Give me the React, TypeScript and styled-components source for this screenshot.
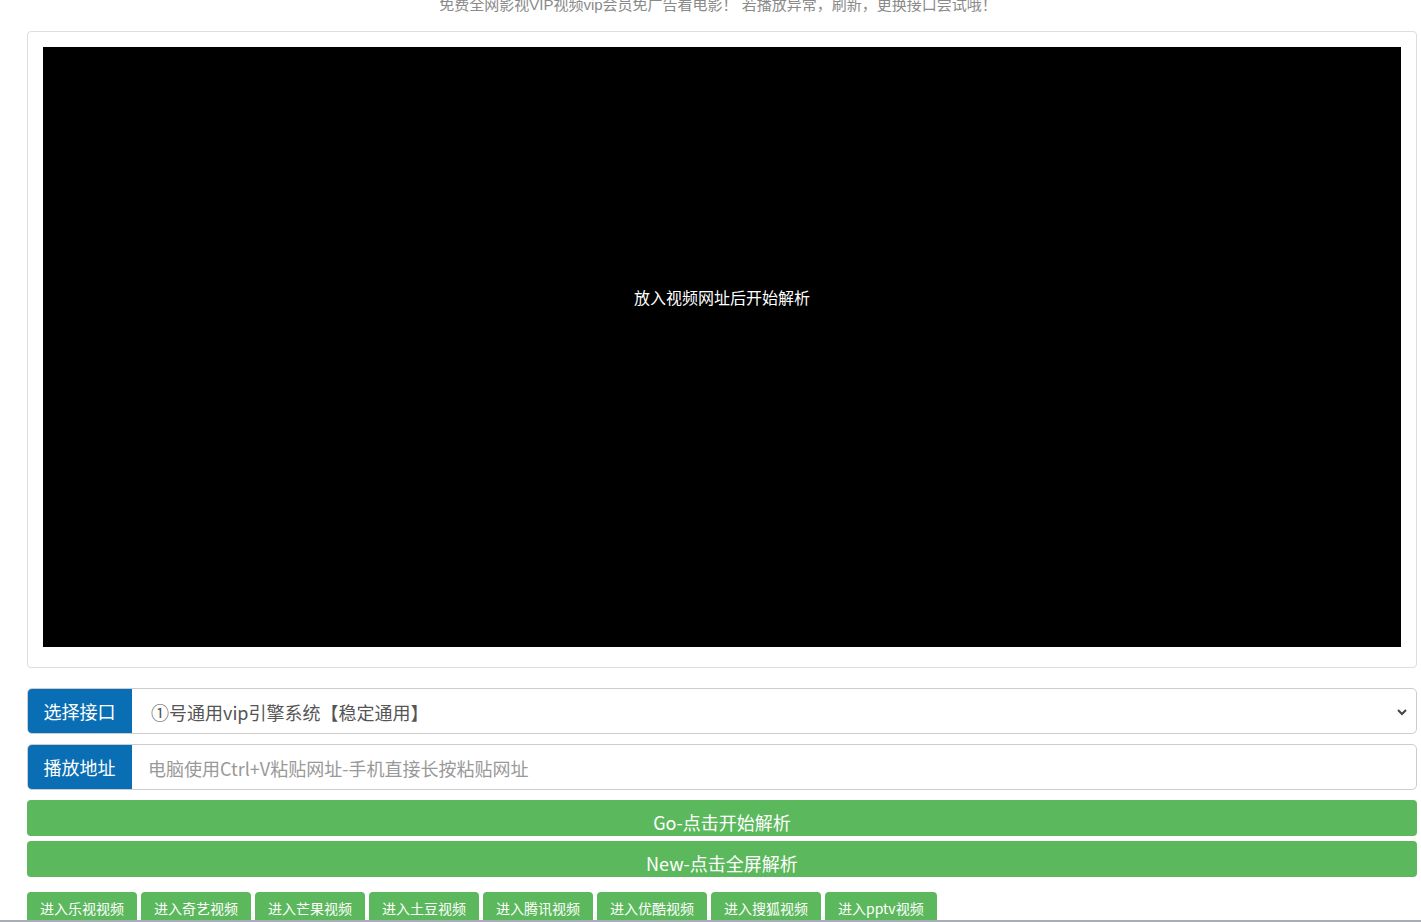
import React from "react";
import styled, { createGlobalStyle } from "styled-components";

const Global = createGlobalStyle`
  html, body { margin: 0; padding: 0; background: #fff; overflow: hidden; }
  body { font-family: "Liberation Sans", "Noto Sans CJK SC", sans-serif; }
  * { box-sizing: border-box; }
`;

const Page = styled.div`
  padding: 0 4px 0 27px;
  margin-top: -6px;
`;

const Notice = styled.div`
  text-align: center;
  font-size: 15px;
  line-height: 21px;
  color: #8a8a8a;
  padding-right: 8px;
  margin-bottom: 16px;
`;

const Panel = styled.div`
  border: 1px solid #ddd;
  border-radius: 4px;
  padding: 15px 15px 20px;
  margin-bottom: 20px;
`;

const Screen = styled.div`
  background: #000;
  height: 600px;
  display: flex;
  justify-content: center;
  padding-top: 239px;
  color: #fff;
  font-size: 16px;
  line-height: 22px;
  font-family: "Noto Sans CJK SC", sans-serif;
`;

const Group = styled.div`
  display: flex;
  height: 46px;
  margin-bottom: 10px;
  border: 1px solid #ccc;
  border-radius: 5px;
  overflow: hidden;
`;

const Addon = styled.div`
  width: 105px;
  flex: none;
  background: #0a6eb4;
  color: #fff;
  font-size: 18px;
  display: flex;
  align-items: center;
  justify-content: center;
  font-family: "Noto Sans CJK SC", sans-serif;
  margin: -1px 0 -1px -1px;
`;

const Field = styled.div<{ $placeholder?: boolean }>`
  flex: 1;
  display: flex;
  align-items: center;
  padding: 2px 8px 0 ${(p) => (p.$placeholder ? 16 : 19)}px;
  font-size: 18px;
  color: ${(p) => (p.$placeholder ? "#999" : "#555")};
  font-family: "Noto Sans CJK SC", sans-serif;
  justify-content: space-between;
`;

const Chevron = styled.svg`
  width: 12px;
  height: 12px;
`;

const GreenBar = styled.div`
  height: 36px;
  background: #5cb85c;
  border-radius: 4px;
  color: #fff;
  font-size: 18px;
  display: flex;
  justify-content: center;
  align-items: flex-end;
  padding-bottom: 1px;
  margin-bottom: 5px;
  font-family: "Noto Sans CJK SC", sans-serif;
`;

const LinkRow = styled.div`
  display: flex;
  gap: 4px;
  margin-top: 15px;
`;

const LinkBtn = styled.div`
  background: #5cb85c;
  color: #fff;
  font-size: 14px;
  height: 40px;
  padding: 6px 13px 0;
  border-radius: 4px 4px 0 0;
  font-family: "Noto Sans CJK SC", sans-serif;
  line-height: 20px;
  white-space: nowrap;
`;

const BottomEdge = styled.div`
  position: fixed;
  left: 0;
  right: 0;
  bottom: 0;
  height: 2px;
  background: #a9adb8;
`;

const links = ["进入乐视视频", "进入奇艺视频", "进入芒果视频", "进入土豆视频", "进入腾讯视频", "进入优酷视频", "进入搜狐视频", "进入pptv视频"];

export default function App() {
  return (
    <>
      <Global />
      <Page>
        <Notice>免费全网影视VIP视频vip会员免广告看电影！ 若播放异常，刷新，更换接口尝试哦！</Notice>
        <Panel>
          <Screen>放入视频网址后开始解析</Screen>
        </Panel>
        <Group>
          <Addon>选择接口</Addon>
          <Field>
            <span>①号通用vip引擎系统【稳定通用】</span>
            <Chevron viewBox="0 0 12 12">
              <path d="M2 4 L6 8 L10 4" fill="none" stroke="#444" strokeWidth="2" />
            </Chevron>
          </Field>
        </Group>
        <Group>
          <Addon>播放地址</Addon>
          <Field $placeholder>电脑使用Ctrl+V粘贴网址-手机直接长按粘贴网址</Field>
        </Group>
        <GreenBar>Go-点击开始解析</GreenBar>
        <GreenBar>New-点击全屏解析</GreenBar>
        <LinkRow>
          {links.map((l) => (
            <LinkBtn key={l}>{l}</LinkBtn>
          ))}
        </LinkRow>
      </Page>
      <BottomEdge />
    </>
  );
}
